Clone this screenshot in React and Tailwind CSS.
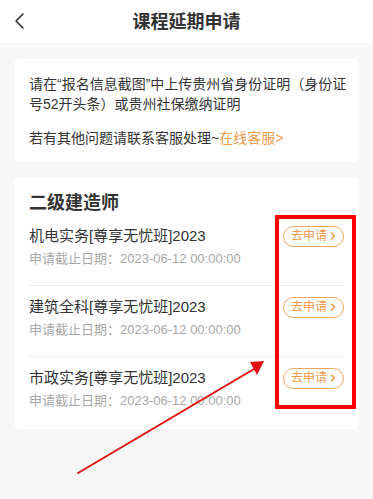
import React from "react";

const courses = [
  { name: "机电实务[尊享无忧班]2023", deadline: "2023-06-12 00:00:00" },
  { name: "建筑全科[尊享无忧班]2023", deadline: "2023-06-12 00:00:00" },
  { name: "市政实务[尊享无忧班]2023", deadline: "2023-06-12 00:00:00" },
];

const ApplyButton = () => (
  <button className="flex items-center h-[21px] w-[61px] justify-center gap-[3px] rounded-full border border-[#eba45e] text-[12px] leading-none text-[#eb9a4c]">
    <span>去申请</span>
    <svg width="6" height="8" viewBox="0 0 6 8" fill="none">
      <path d="M1.5 1 L4.5 4 L1.5 7" stroke="#eb9a4c" strokeWidth="1.6" strokeLinecap="round" strokeLinejoin="round" />
    </svg>
  </button>
);

const App = () => {
  return (
    <div
      className="relative min-h-[499px] w-full bg-[#f7f7f7] text-[#333]"
      style={{ fontFamily: '"Liberation Sans", "Noto Sans CJK SC", sans-serif' }}
    >
      {/* Header */}
      <div className="relative flex h-[43px] items-center justify-center bg-white">
        <button className="absolute left-[13px] top-[12px]">
          <svg width="14" height="18" viewBox="0 0 14 18" fill="none">
            <path d="M10 2 L3 9 L10 16" stroke="#333" strokeWidth="1.6" strokeLinecap="round" strokeLinejoin="round" />
          </svg>
        </button>
        <h1 className="text-[18px] font-bold leading-none text-[#333]">课程延期申请</h1>
      </div>

      {/* Notice */}
      <div className="mx-[14px] mt-[16px] rounded-[6px] bg-white pb-[14px] pl-[15px] pr-[10px] pt-[15px] text-[14px] leading-[20px] text-[#333]">
        <p>请在“报名信息截图”中上传贵州省身份证明（身份证号52开头条）或贵州社保缴纳证明</p>
        <p className="mt-[14px]">
          若有其他问题请联系客服处理~<span className="text-[#f09b4a]">在线客服&gt;</span>
        </p>
      </div>

      {/* Courses */}
      <div className="mx-[14px] mt-[15px] rounded-[6px] bg-white px-[15px] pt-[14px]">
        <h2 className="text-[18px] font-bold leading-[24px] text-[#333]">二级建造师</h2>
        {courses.map((c, i) => (
          <div
            key={c.name}
            className={
              i < courses.length - 1
                ? "border-b border-[#eeeeee] pb-[17px] pt-[10px]"
                : "pb-[19px] pt-[10px]"
            }
          >
            <div className="flex items-center justify-between">
              <span className="text-[15px] leading-[22px] text-[#333]">{c.name}</span>
              <ApplyButton />
            </div>
            <div className="mt-[3px] text-[13px] leading-[18px] text-[#a8a8a8]">
              申请截止日期：{c.deadline}
            </div>
          </div>
        ))}
      </div>

      {/* annotation: red box */}
      <div className="pointer-events-none absolute left-[275px] top-[215px] h-[194px] w-[81px] border-[4px] border-[#ff0000]" />

      {/* annotation: arrow */}
      <svg className="pointer-events-none absolute left-0 top-0" width="373" height="499" viewBox="0 0 373 499">
        <line x1="78" y1="473" x2="254" y2="369" stroke="#e01010" strokeWidth="2" strokeLinecap="round" />
        <polygon points="264,361 250,362 257,375" fill="#e01010" />
      </svg>
    </div>
  );
};

export default App;
